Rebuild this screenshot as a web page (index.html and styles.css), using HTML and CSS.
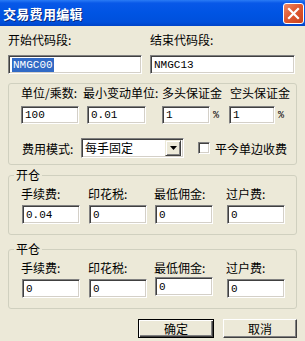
FILE: index.html
```html
<!DOCTYPE html>
<html lang="zh-CN">
<head>
    <meta charset="UTF-8">
    <meta name="viewport" content="width=device-width, initial-scale=1.0">
    <title>交易费用编辑</title>
    <link rel="stylesheet" href="styles.css">
</head>
<body>
    <div class="window">
        <div class="titlebar">
            <span class="title">交易费用编辑</span>
            <span class="close">
                <svg width="21" height="21" viewBox="0 0 21 21">
                    <path d="M6 6 L15 15 M15 6 L6 15" stroke="#fff" stroke-width="2.2" stroke-linecap="square"/>
                </svg>
            </span>
        </div>

        <div class="content">
            <div class="codes">
                <div>
                    <div class="lbl">开始代码段:</div>
                    <div class="edit code"><span class="sel">NMGC00</span></div>
                </div>
                <div>
                    <div class="lbl">结束代码段:</div>
                    <div class="edit code">NMGC13</div>
                </div>
            </div>

            <div class="group">
                <div class="row labels">
                    <span class="w1">单位/乘数:</span>
                    <span class="w2">最小变动单位:</span>
                    <span class="w3">多头保证金</span>
                    <span>空头保证金</span>
                </div>
                <div class="row inputs">
                    <div class="edit e1">100</div>
                    <div class="edit e2">0.01</div>
                    <div class="edit e3">1</div>
                    <span class="pct">%</span>
                    <div class="edit e4">1</div>
                    <span class="pct">%</span>
                </div>
                <div class="row mode">
                    <span class="mode-lbl">费用模式:</span>
                    <div class="combo">
                        <span class="combo-text">每手固定</span>
                        <span class="combo-btn">
                            <svg width="7" height="4" viewBox="0 0 7 4"><path d="M0 0 H7 L3.5 4 Z" fill="#000"/></svg>
                        </span>
                    </div>
                    <span class="check"></span>
                    <span class="check-lbl">平今单边收费</span>
                </div>
            </div>

            <fieldset class="fees first">
                <legend>开仓</legend>
                <div class="fee-grid">
                    <span class="lbl">手续费:</span>
                    <span class="lbl">印花税:</span>
                    <span class="lbl">最低佣金:</span>
                    <span class="lbl">过户费:</span>
                    <div class="edit fee">0.04</div>
                    <div class="edit fee">0</div>
                    <div class="edit fee">0</div>
                    <div class="edit fee">0</div>
                </div>
            </fieldset>

            <fieldset class="fees">
                <legend>平仓</legend>
                <div class="fee-grid">
                    <span class="lbl">手续费:</span>
                    <span class="lbl">印花税:</span>
                    <span class="lbl">最低佣金:</span>
                    <span class="lbl">过户费:</span>
                    <div class="edit fee">0</div>
                    <div class="edit fee">0</div>
                    <div class="edit fee up">0</div>
                    <div class="edit fee">0</div>
                </div>
            </fieldset>

            <div class="buttons">
                <button class="btn default">确定</button>
                <button class="btn cancel">取消</button>
            </div>
        </div>
    </div>
</body>
</html>
```

FILE: styles.css
```css
body {
    margin: 0;
    background-color: #ECE9D8;
    font-family: "Noto Sans CJK SC", sans-serif;
    font-size: 12px;
    color: #000;
}
.window {
    width: 305px;
    height: 341px;
    overflow: hidden;
}
.titlebar {
    height: 26px;
    box-sizing: border-box;
    display: flex;
    align-items: center;
    justify-content: space-between;
    padding: 0 1px 0 3px;
    background: linear-gradient(to bottom, #2A7BF5 0%, #0858E8 12%, #0054E3 50%, #0050DC 85%, #0044C8 100%);
}
.title {
    color: #fff;
    font-weight: bold;
    font-size: 13px;
    letter-spacing: 0.3px;
    text-shadow: 1px 1px #0A2A80;
}
.close {
    width: 21px;
    height: 21px;
    box-sizing: border-box;
    border: 1px solid #fff;
    border-radius: 3px;
    background: linear-gradient(135deg, #F08A66 0%, #E05A32 45%, #C9421C 100%);
    display: flex;
    align-items: center;
    justify-content: center;
}
.close svg {
    margin: -1px;
}
.content {
    padding: 7px 8px 0 8px;
}
.codes {
    display: grid;
    grid-template-columns: 134px 145px;
    column-gap: 8px;
}
.lbl {
    display: block;
    line-height: 14px;
    height: 14px;
    white-space: nowrap;
}
.edit {
    box-sizing: border-box;
    background-color: #fff;
    border: 1px solid;
    border-color: #808080 #fff #fff #808080;
    box-shadow: inset 1px 1px #404040, inset -1px -1px #D4D0C8;
    padding-left: 3px;
    font-family: "Liberation Mono", monospace;
    font-size: 11px;
    white-space: nowrap;
    display: flex;
    align-items: center;
}
.code {
    margin-top: 8px;
    height: 19px;
}
.sel {
    background-color: #316AC5;
    color: #fff;
    padding: 1px 1px;
}
.group {
    margin-top: 9px;
    height: 82px;
    box-sizing: border-box;
    border: 1px solid #D0D0BF;
    border-radius: 3px;
    padding: 2px 0 0 12px;
}
.row {
    display: flex;
    align-items: center;
    white-space: nowrap;
}
.labels {
    line-height: 14px;
}
.w1 { width: 62px; }
.w2 { width: 79px; }
.w3 { width: 68px; }
.inputs {
    margin-top: 6px;
}
.inputs .edit {
    height: 18px;
}
.e1 { width: 58px; }
.e2 { width: 59px; margin-left: 8px; }
.e3 { width: 48px; margin-left: 16px; }
.e4 { width: 46px; }
.pct {
    width: 19px;
    box-sizing: border-box;
    padding-left: 3px;
    font-family: "Liberation Mono", monospace;
    font-size: 10px;
}
.mode {
    margin-top: 14px;
}
.mode-lbl {
    width: 60px;
    padding-left: 1px;
    box-sizing: border-box;
}
.combo {
    width: 103px;
    height: 20px;
    box-sizing: border-box;
    background-color: #fff;
    border: 1px solid;
    border-color: #808080 #fff #fff #808080;
    box-shadow: inset 1px 1px #404040, inset -1px -1px #D4D0C8;
    display: flex;
    align-items: center;
    justify-content: space-between;
    padding: 2px;
}
.combo-text {
    padding-left: 1px;
    line-height: 14px;
}
.combo-btn {
    width: 16px;
    height: 16px;
    box-sizing: border-box;
    background-color: #ECE9D8;
    border: 1px solid;
    border-color: #ECE9D8 #404040 #404040 #ECE9D8;
    box-shadow: inset 1px 1px #fff, inset -1px -1px #808080;
    display: flex;
    align-items: center;
    justify-content: center;
}
.check {
    width: 12px;
    height: 12px;
    margin-left: 14px;
    box-sizing: border-box;
    background-color: #fff;
    border: 1px solid;
    border-color: #808080 #fff #fff #808080;
    box-shadow: inset 1px 1px #404040, inset -1px -1px #D4D0C8;
}
.check-lbl {
    margin-left: 5px;
}
.fees {
    margin: 8px 0 0 0;
    padding: 0;
    min-width: 0;
    border: 1px solid #D0D0BF;
    border-radius: 3px;
}
.fees.first {
    margin-top: 4px;
}
.fees legend {
    margin-left: 5px;
    padding: 0 2px;
    line-height: 12px;
}
.fee-grid {
    display: grid;
    grid-template-columns: 67px 66px 72px 59px;
    padding: 6px 0 10px 13px;
}
.fee-grid .lbl {
    margin-left: -1px;
}
.fee {
    margin-top: 4px;
    height: 19px;
    width: 58px;
}
.fee.up {
    margin-top: 2px;
    margin-bottom: 2px;
}
.buttons {
    display: flex;
    justify-content: flex-end;
    gap: 9px;
    margin-top: 10px;
}
.btn {
    height: 19px;
    padding: 0;
    font-family: "Noto Sans CJK SC", sans-serif;
    font-size: 12px;
    line-height: 14px;
    color: #000;
    background-color: #ECE9D8;
    border: 1px solid;
    border-color: #fff #404040 #404040 #fff;
    box-shadow: inset -1px -1px #808080;
}
.btn.default {
    width: 76px;
    border-color: #000;
    box-shadow: inset 1px 1px #fff, inset -1px -1px #404040, inset -2px -2px #808080;
}
.btn.cancel {
    width: 74px;
}
```
